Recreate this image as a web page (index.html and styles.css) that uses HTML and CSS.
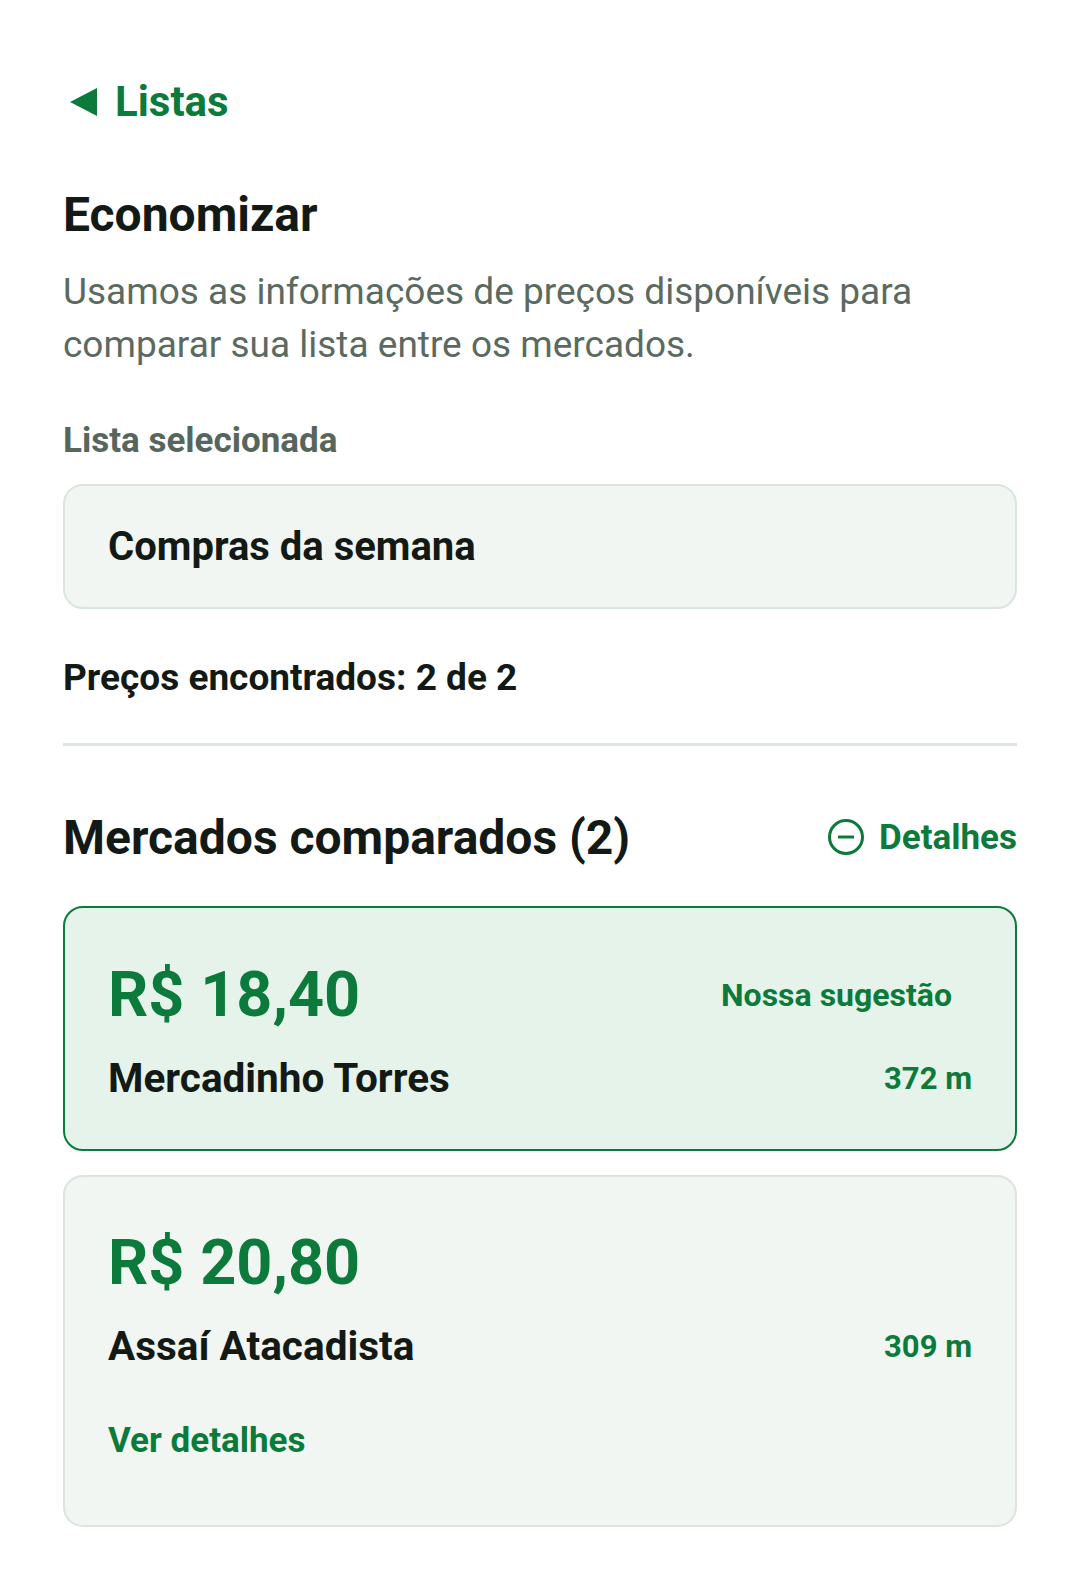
FILE: index.html
```html
<!DOCTYPE html>
<html lang="pt-BR">
<head>
  <meta charset="UTF-8" />
  <meta name="viewport" content="width=device-width, initial-scale=1.0" />
  <title>Economizar</title>
  <link rel="stylesheet" href="styles.css">
</head>
<body>
  <div class="page">
    <a class="back" href="#">
      <span class="back-arrow"></span>
      Listas
    </a>

    <h1>Economizar</h1>
    <p class="intro">Usamos as informações de preços disponíveis para comparar sua lista entre os mercados.</p>

    <div class="label">Lista selecionada</div>
    <div class="select-box">Compras da semana</div>

    <div class="found">Preços encontrados: 2 de 2</div>
    <hr class="divider" />

    <div class="section-head">
      <h2>Mercados comparados (2)</h2>
      <a class="toggle" href="#">
        <svg width="38" height="38" viewBox="0 0 38 38">
          <circle cx="19" cy="19" r="16.5" fill="none" stroke="#0b7a3b" stroke-width="3" />
          <line x1="11" y1="19" x2="27" y2="19" stroke="#0b7a3b" stroke-width="3" />
        </svg>
        Detalhes
      </a>
    </div>

    <div class="market best">
      <div class="market-row">
        <div class="price">R$ 18,40</div>
        <div class="badge">Nossa sugestão</div>
      </div>
      <div class="market-row name-row">
        <div class="name">Mercadinho Torres</div>
        <div class="dist">372 m</div>
      </div>
    </div>

    <div class="market">
      <div class="market-row">
        <div class="price">R$ 20,80</div>
      </div>
      <div class="market-row name-row">
        <div class="name">Assaí Atacadista</div>
        <div class="dist">309 m</div>
      </div>
      <a class="more" href="#">Ver detalhes</a>
    </div>
  </div>
</body>
</html>
```

FILE: styles.css
```css
body {
  margin: 0;
  font-family: Roboto, "Noto Sans", Arial, sans-serif;
  background: #fff;
  color: #131a15;
}
a {
  text-decoration: none;
  color: #0b7a3b;
}
.page {
  padding: 78px 63px 40px 63px;
}
.back {
  display: flex;
  align-items: center;
  gap: 18px;
  margin-left: 7px;
  font-size: 42px;
  line-height: 48px;
  font-weight: 700;
}
.back-arrow {
  width: 0;
  height: 0;
  border-top: 14px solid transparent;
  border-bottom: 14px solid transparent;
  border-right: 27px solid #0b7a3b;
}
h1 {
  margin: 60px 0 0;
  font-size: 48px;
  line-height: 58px;
  font-weight: 700;
}
.intro {
  margin: 21px 0 0;
  font-size: 37px;
  line-height: 53px;
  color: #5b6a61;
}
.label {
  margin-top: 49px;
  font-size: 35px;
  line-height: 42px;
  font-weight: 700;
  color: #56665d;
}
.select-box {
  margin-top: 22px;
  box-sizing: border-box;
  height: 125px;
  display: flex;
  align-items: center;
  padding-left: 43px;
  background: #f1f6f2;
  border: 2px solid #dae5de;
  border-radius: 20px;
  font-size: 40px;
  font-weight: 700;
}
.found {
  margin-top: 46px;
  font-size: 37px;
  line-height: 46px;
  font-weight: 700;
}
.divider {
  margin: 42px 0 0;
  height: 3px;
  border: none;
  background: #dde6e0;
}
.section-head {
  margin-top: 62px;
  height: 58px;
  display: flex;
  align-items: center;
  justify-content: space-between;
}
h2 {
  margin: 0;
  font-size: 48px;
  font-weight: 700;
}
.toggle {
  display: flex;
  align-items: center;
  gap: 14px;
  font-size: 35px;
  font-weight: 700;
}
.market {
  margin-top: 24px;
  padding: 50px 43px 61px 43px;
  background: #f1f6f2;
  border: 2px solid #dbe5de;
  border-radius: 20px;
}
.market.best {
  margin-top: 40px;
  padding: 51px 43px 46px 43px;
  background: #e6f3ea;
  border-color: #0b7a3b;
}
.market-row {
  display: flex;
  align-items: center;
  justify-content: space-between;
}
.price {
  font-size: 63px;
  line-height: 72px;
  font-weight: 700;
  color: #0b7a3b;
}
.badge {
  margin-right: 20px;
  font-size: 32px;
  font-weight: 700;
  color: #0b7a3b;
}
.name-row {
  margin-top: 22px;
}
.name {
  font-size: 40.5px;
  line-height: 50px;
  font-weight: 700;
}
.dist {
  font-size: 31px;
  font-weight: 700;
  color: #0b7a3b;
}
.more {
  display: block;
  margin-top: 47px;
  font-size: 35px;
  line-height: 46px;
  font-weight: 700;
}
```
